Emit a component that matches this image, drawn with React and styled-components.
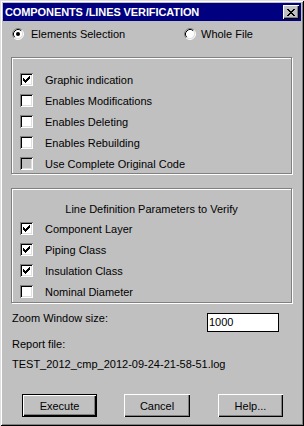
import React from 'react'
import styled, { createGlobalStyle } from 'styled-components'

const GlobalStyle = createGlobalStyle`
  body {
    margin: 0;
    background: #c0c0c0;
    font-family: "Liberation Sans", Arial, sans-serif;
    font-size: 11px;
    color: #000;
  }
`

const Window = styled.div`
  width: 304px;
  height: 426px;
  box-sizing: border-box;
  padding: 3px;
  background: #c0c0c0;
  box-shadow: inset 1px 1px #dfdfdf, inset -1px -1px #000,
    inset 2px 2px #fff, inset -2px -2px #808080;
  display: flex;
  flex-direction: column;
`

const TitleBar = styled.div`
  height: 18px;
  background: #000080;
  display: flex;
  align-items: center;
  justify-content: space-between;
  padding: 0 2px 0 2px;
`

const Title = styled.span`
  color: #fff;
  font-weight: bold;
  font-size: 11px;
  letter-spacing: -0.1px;
`

const CloseButton = styled.div`
  width: 16px;
  height: 14px;
  box-sizing: border-box;
  background: #c0c0c0;
  box-shadow: inset 1px 1px #fff, inset -1px -1px #000, inset -2px -2px #808080;
  display: flex;
  align-items: center;
  justify-content: center;
`

const Content = styled.div`
  padding: 5px 8px 0 8px;
  display: flex;
  flex-direction: column;
`

const RadioRow = styled.div`
  display: flex;
  height: 16px;
  align-items: center;
  padding-left: 1px;
`

const RadioItem = styled.label`
  display: flex;
  align-items: center;
  flex-shrink: 0;
  gap: ${({ gap }) => gap}px;
  width: ${({ w }) => (w ? `${w}px` : 'auto')};
`

const GroupBox = styled.div`
  margin-top: ${({ top }) => top}px;
  height: ${({ h }) => h}px;
  box-sizing: border-box;
  border: 1px solid #808080;
  box-shadow: inset 1px 1px #fff, 1px 1px #fff;
  width: 281px;
  padding-top: ${({ pad }) => pad}px;
  display: flex;
  flex-direction: column;
`

const GroupHeader = styled.div`
  height: 18px;
  line-height: 18px;
  text-align: center;
`

const CheckRow = styled.div`
  height: 21px;
  flex-shrink: 0;
  display: flex;
  align-items: center;
  padding-left: 8px;
  gap: 12px;
`

const Box = styled.span`
  width: 13px;
  height: 13px;
  box-sizing: border-box;
  background: ${({ disabled }) => (disabled ? '#c0c0c0' : '#fff')};
  box-shadow: inset 1px 1px #808080, inset -1px -1px #fff,
    inset 2px 2px #000, inset -2px -2px #dfdfdf;
  display: flex;
  align-items: center;
  justify-content: center;
`

const FieldRow = styled.div`
  margin-top: 10px;
  display: flex;
  align-items: flex-start;
  justify-content: space-between;
  padding-left: 1px;
  padding-right: 14px;
`

const FieldLabel = styled.span`
  line-height: 11px;
`

const Input = styled.div`
  width: 72px;
  height: 19px;
  box-sizing: border-box;
  border: 1px solid #000;
  background: #fff;
  padding-left: 1px;
  line-height: 17px;
`

const Text = styled.div`
  margin-top: ${({ top }) => top}px;
  padding-left: 1px;
  line-height: 12px;
`

const ButtonRow = styled.div`
  margin-top: 24px;
  display: flex;
  padding-left: 11px;
`

const Button = styled.div`
  width: ${({ w }) => w}px;
  height: 23px;
  margin-right: ${({ gapAfter }) => gapAfter || 0}px;
  box-sizing: border-box;
  display: flex;
  align-items: center;
  justify-content: center;
  background: #c0c0c0;
  border: ${({ primary }) => (primary ? '1px solid #000' : 'none')};
  box-shadow: inset 1px 1px #fff, inset -1px -1px #000, inset -2px -2px #808080;
`

const Check = () => (
  <svg width="7" height="7" viewBox="0 0 7 7" shapeRendering="crispEdges">
    <path
      d="M6 0h1v1h-1zM5 1h2v1h-2zM0 2h1v1h-1zM4 2h3v1h-3zM0 3h2v1h-2zM3 3h3v1h-3zM0 4h5v1h-5zM1 5h3v1h-3zM2 6h1v1h-1z"
      fill="#000"
    />
  </svg>
)

const Radio = ({ checked }) => (
  <svg width="12" height="12" viewBox="0 0 12 12">
    <circle cx="6" cy="6" r="5" fill="#fff" />
    <path d="M2.11 9.89 A5.5 5.5 0 0 1 9.89 2.11" stroke="#808080" fill="none" />
    <path d="M9.89 2.11 A5.5 5.5 0 0 1 2.11 9.89" stroke="#fff" fill="none" />
    <path d="M2.82 9.18 A4.5 4.5 0 0 1 9.18 2.82" stroke="#000" fill="none" />
    <path d="M9.18 2.82 A4.5 4.5 0 0 1 2.82 9.18" stroke="#dfdfdf" fill="none" />
    {checked && <circle cx="6" cy="6" r="2" fill="#000" />}
  </svg>
)

const CheckItem = ({ label, checked, disabled }) => (
  <CheckRow>
    <Box disabled={disabled}>{checked && <Check />}</Box>
    <span>{label}</span>
  </CheckRow>
)

const options = [
  { label: 'Graphic indication', checked: true },
  { label: 'Enables Modifications' },
  { label: 'Enables Deleting' },
  { label: 'Enables Rebuilding' },
  { label: 'Use Complete Original Code', disabled: true }
]

const params = [
  { label: 'Component Layer', checked: true },
  { label: 'Piping Class', checked: true },
  { label: 'Insulation Class', checked: true },
  { label: 'Nominal Diameter' }
]

export const App = () => (
  <>
    <GlobalStyle />
    <Window>
      <TitleBar>
        <Title>COMPONENTS /LINES VERIFICATION</Title>
        <CloseButton>
          <svg width="8" height="7" viewBox="0 0 8 7" shapeRendering="crispEdges">
            <path
              d="M0 0h2v1h-2zM6 0h2v1h-2zM1 1h2v1h-2zM5 1h2v1h-2zM2 2h4v1h-4zM3 3h2v1h-2zM2 4h4v1h-4zM1 5h2v1h-2zM5 5h2v1h-2zM0 6h2v1h-2zM6 6h2v1h-2z"
              fill="#000"
            />
          </svg>
        </CloseButton>
      </TitleBar>
      <Content>
        <RadioRow>
          <RadioItem w={172} gap={7}>
            <Radio checked />
            <span>Elements Selection</span>
          </RadioItem>
          <RadioItem gap={5}>
            <Radio />
            <span>Whole File</span>
          </RadioItem>
        </RadioRow>
        <GroupBox top={15} h={117} pad={11}>
          {options.map(o => <CheckItem key={o.label} {...o} />)}
        </GroupBox>
        <GroupBox top={14} h={115} pad={11}>
          <GroupHeader>Line Definition Parameters to Verify</GroupHeader>
          {params.map(o => <CheckItem key={o.label} {...o} />)}
        </GroupBox>
        <FieldRow>
          <FieldLabel>Zoom Window size:</FieldLabel>
          <Input>1000</Input>
        </FieldRow>
        <Text top={6}>Report file:</Text>
        <Text top={8}>TEST_2012_cmp_2012-09-24-21-58-51.log</Text>
        <ButtonRow>
          <Button w={75} primary gapAfter={27}>Execute</Button>
          <Button w={66} gapAfter={28}>Cancel</Button>
          <Button w={65}>Help...</Button>
        </ButtonRow>
      </Content>
    </Window>
  </>
)

export default App
